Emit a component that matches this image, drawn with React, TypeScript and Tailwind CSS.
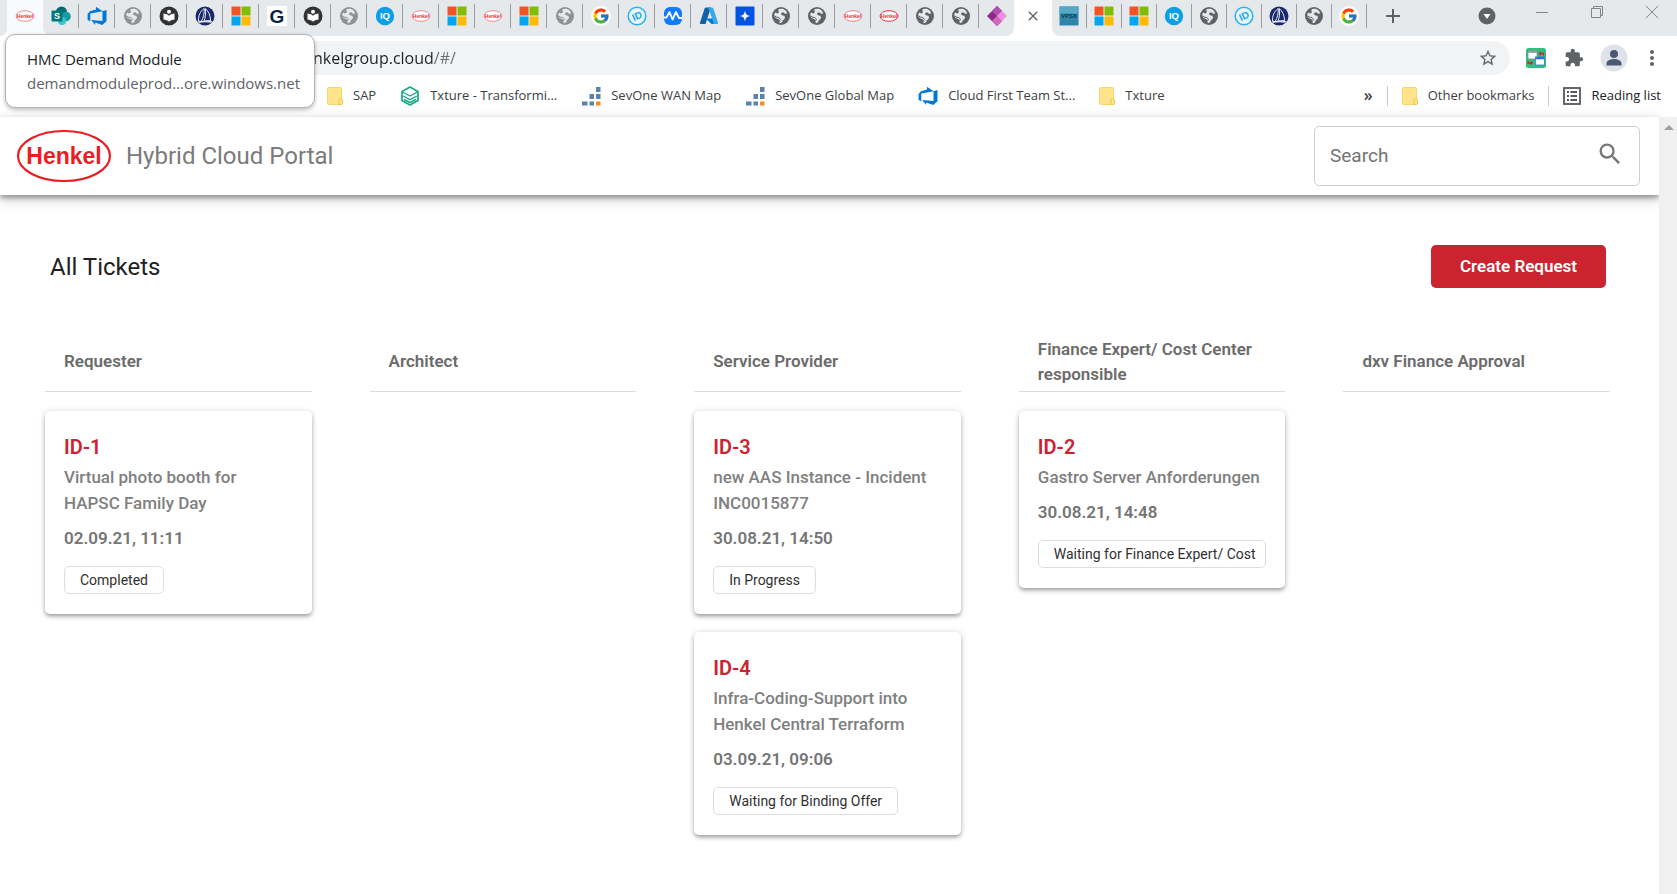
import React from "react";
import { FcGoogle } from "react-icons/fc";
import { MdClose, MdExtension, MdMoreVert, MdSearch, MdStarBorder } from "react-icons/md";

type IconProps = { className?: string };

function HenkelBadge({ fill = "#fff", stroke = "#f08c92" }: { fill?: string; stroke?: string }) {
  return (
    <svg viewBox="0 0 20 20" className="size-5">
      <ellipse cx="10" cy="10" rx="9" ry="5.3" fill={fill} stroke={stroke} strokeWidth="1" />
      <text x="10" y="12" textAnchor="middle" fontFamily="Liberation Sans, sans-serif" fontWeight="700" fontSize="5" fill="#e8323c">
        Henkel
      </text>
    </svg>
  );
}

function SharePoint() {
  return (
    <svg viewBox="0 0 20 20" className="size-5">
      <circle cx="10.5" cy="6" r="5.5" fill="#036c70" />
      <circle cx="15" cy="10.5" r="4.8" fill="#1a9ba1" />
      <circle cx="11" cy="15" r="4" fill="#37c6d0" />
      <rect x="0.5" y="4.5" width="11" height="11" rx="1" fill="#03787c" />
      <text x="6" y="13.2" textAnchor="middle" fontFamily="Liberation Sans, sans-serif" fontWeight="700" fontSize="9" fill="#fff">
        S
      </text>
    </svg>
  );
}

function DevOps() {
  return (
    <svg viewBox="0 0 20 20" className="size-5">
      <path
        d="M19.5 4v11.3l-4.3 3.7-7-2.6v2.5L4.2 14l11.300 .9V5.200L19.500 4zM15.600 5.200L9 .7v2.700L3 5.200.6 8v6l2.700 1.200V7.600l12.300-2.400z"
        fill="#0078d7"
      />
    </svg>
  );
}

function Globe({ color }: { color: string }) {
  return (
    <svg viewBox="0 0 20 20" className="size-5">
      <circle cx="10" cy="10" r="9" fill={color} />
      <path
        d="M7.500 3.300c2-.9 5-.6 6.800.9 1 .9 1.700 2 2 3.300l-2.300.2-1.600-1.500-2 .5-.3 1.700 1.500 1.200 1.700.2.700 1.600-.9 2-1.300.6-.5 1.900-1.500 1.100c-.8 0-1.400-.2-1.400-.2l.300-2.400-1.400-1.500-2.300-.7-1.700-1.900c-.1-1.300.1-2.500.7-3.700l2.300.9 1.500-.9-.3-1.400z"
        fill="#e6e9ec"
      />
      <path d="M3.200 9.800l2.200 1.300 2.500.4 1.500 1.700-.6 1.500" fill="none" stroke={color} strokeWidth="1" />
    </svg>
  );
}

function Reader() {
  return (
    <svg viewBox="0 0 20 20" className="size-5">
      <circle cx="10" cy="10" r="9.500" fill="#333" />
      <circle cx="10" cy="5.800" r="2" fill="#fff" />
      <path d="M4.500 7.500c2.200.2 4 .9 5.500 2.200 1.500-1.300 3.300-2 5.500-2.200v6c-2.200.2-4 .9-5.500 2.200-1.500-1.300-3.300-2-5.500-2.200z" fill="#fff" />
    </svg>
  );
}

function Sailboat() {
  return (
    <svg viewBox="0 0 20 20" className="size-5">
      <circle cx="10" cy="10" r="9.500" fill="#1a2a6c" />
      <path d="M9.200 2.500c.3 4.500-.6 9-3 13l-2.700-.5C3.300 10 5 5.500 9.200 2.500z" fill="none" stroke="#e8ebf7" strokeWidth="1" />
      <path d="M10.300 2.500c3.200 2.700 5.200 7 5.200 12l-6.500.6c1.500-3.600 2-8 1.300-12.600z" fill="none" stroke="#e8ebf7" strokeWidth="1" />
      <path d="M2.500 15.500c4-.8 10-.9 15-.4l-1.300 1.700c-4-.9-8.500-.8-12.200.3z" fill="#dfe3f3" />
    </svg>
  );
}

function Microsoft() {
  return (
    <svg viewBox="0 0 20 20" className="size-5">
      <path d="M.5.500h9v9h-9z" fill="#f35325" />
      <path d="M10.500.500h9v9h-9z" fill="#81bc06" />
      <path d="M.5 10.500h9v9h-9z" fill="#05a6f0" />
      <path d="M10.500 10.500h9v9h-9z" fill="#ffba08" />
    </svg>
  );
}

function LetterG() {
  return (
    <svg viewBox="0 0 20 20" className="size-5">
      <rect width="20" height="20" fill="#fff" />
      <text x="10" y="16.800" textAnchor="middle" fontFamily="Liberation Sans, sans-serif" fontWeight="700" fontSize="19" fill="#0c2340">
        G
      </text>
    </svg>
  );
}

function Iq() {
  return (
    <svg viewBox="0 0 20 20" className="size-5">
      <circle cx="10" cy="10" r="9.200" fill="#0a9fe6" />
      <text x="10" y="13.300" textAnchor="middle" fontFamily="Liberation Sans, sans-serif" fontWeight="700" fontSize="9.500" fill="#fff">
        IQ
      </text>
    </svg>
  );
}

function GoogleDisc() {
  return (
    <span className="flex size-5 items-center justify-center rounded-full bg-white">
      <FcGoogle className="size-[18px]" />
    </span>
  );
}

function IdBadge() {
  return (
    <svg viewBox="0 0 20 20" className="size-5">
      <circle cx="10" cy="10" r="8.800" fill="#e8f5fc" stroke="#2db2f0" strokeWidth="1.600" />
      <text x="10" y="13.500" textAnchor="middle" transform="rotate(-25 10 10)" fontFamily="Liberation Sans, sans-serif" fontWeight="700" fontSize="10" fill="#1ba6ea">
        ID
      </text>
    </svg>
  );
}

function Pulse() {
  return (
    <svg viewBox="0 0 20 20" className="size-5">
      <rect x="1" y="1" width="18" height="18" rx="6" fill="#0f7bff" />
      <path d="M1 11.500h2.500L6.500 6l3 7.500L13 6l3 6h3" fill="none" stroke="#fff" strokeWidth="1.800" strokeLinejoin="round" />
    </svg>
  );
}

function Azure() {
  return (
    <svg viewBox="0 0 20 20" className="size-5">
      <path d="M7 1.500h5L6.500 18H2c-.8 0-1.300-.7-1-1.500L5.600 2.500c.2-.6.700-1 1.400-1z" fill="#1360a8" />
      <path d="M14.500 12.500H6.800l5.200 5c.4.400.8.500 1.300.5h4.500z" fill="#0078d4" />
      <path d="M8 1.500h5c.6 0 1.200.4 1.400 1L19 16.500c.3.800-.3 1.500-1.100 1.500h-4.500c.8 0 1.300-.7 1.100-1.500L9.500 2.500c-.2-.6-.800-1-1.500-1z" fill="#37a9ea" />
    </svg>
  );
}

function Sparkle() {
  return (
    <svg viewBox="0 0 20 20" className="size-5">
      <rect x=".5" y=".5" width="19" height="19" rx="1" fill="#0052e0" />
      <path d="M10 4.500c.6 3.700 1.800 4.900 5.500 5.500-3.700.6-4.900 1.800-5.500 5.500-.6-3.700-1.800-4.900-5.500-5.500 3.700-.6 4.900-1.800 5.500-5.500z" fill="#fff" />
    </svg>
  );
}

function PowerApps() {
  return (
    <svg viewBox="0 0 20 20" className="size-5">
      <path d="M10 0L0 10l10 10 5-5-5-5 5-5z" fill="#8a2a86" />
      <path d="M10 0l5 5-5 5-5-5z" fill="#b04fae" />
      <path d="M15 5l5 5-5 5-5-5z" fill="#f08fdc" />
      <path d="M10 10l5 5-5 5-5-5z" fill="#d268c4" />
    </svg>
  );
}

function Vpsx() {
  return (
    <svg viewBox="0 0 20 20" className="size-5">
      <rect x=".5" y=".5" width="19" height="19" fill="#2f86a8" />
      <rect x=".5" y=".5" width="19" height="7" fill="#56a9c6" />
      <text x="10" y="12.300" textAnchor="middle" fontFamily="Liberation Sans, sans-serif" fontWeight="700" fontSize="6" fill="#103a52">
        VPSX
      </text>
    </svg>
  );
}

function Folder() {
  return (
    <svg viewBox="0 0 16 18" className="h-[18px] w-4">
      <rect x=".5" y=".5" width="14" height="17" rx="1" fill="#ffe48c" stroke="#f5d76c" />
      <path d="M12 17.500v-4.500c0-1 .8-1.500 1.700-1.500s1.800.6 1.800 1.500v3.500c0 .6-.4 1-1 1z" fill="#ffe48c" stroke="#ecc54a" />
    </svg>
  );
}

function TxtureHex() {
  return (
    <svg viewBox="0 0 20 20" className="size-5" fill="none" stroke="#17a98a" strokeWidth="1.700" strokeLinejoin="round">
      <path d="M10 1l8 4.500v9L10 19l-8-4.500v-9z" />
      <path d="M2.500 6l7.500 4 7.500-4M3 10l7 3.700 7-3.700M4 13.500l6 3 6-3" strokeWidth="1.400" />
    </svg>
  );
}

function SevOne() {
  return (
    <svg viewBox="0 0 20 20" className="size-5">
      <g fill="#5b82ab">
        <rect x="15" y="1" width="4.500" height="5" />
        <rect x="8.500" y="8" width="4.500" height="5" />
        <rect x="15" y="8" width="4.500" height="5" />
        <rect x="1" y="15.500" width="5.500" height="4" />
        <rect x="8.500" y="15.500" width="4.500" height="4" />
      </g>
      <rect x="15" y="15.500" width="4.500" height="4" fill="#f68a1f" />
    </svg>
  );
}

function ReadingListIcon() {
  return (
    <svg viewBox="0 0 18 18" className="size-[18px]">
      <rect x="1" y="1" width="16" height="16" fill="none" stroke="#55595d" strokeWidth="1.800" />
      <path d="M4 5h2M4 9h2M4 13h2M7.500 5H14M7.500 9H14M7.500 13H14" stroke="#55595d" strokeWidth="1.800" />
    </svg>
  );
}

function WindowSwitcher() {
  return (
    <svg viewBox="0 0 20 20" className="size-5">
      <rect width="20" height="20" rx="2.500" fill="#2fbf7e" />
      <rect x="2" y="3" width="9" height="8" fill="#fff" stroke="#8a8f94" strokeWidth=".8" />
      <rect x="2" y="3" width="9" height="2" fill="#9aa0a6" />
      <rect x="9.500" y="9" width="9" height="8" fill="#fff" stroke="#3c78d8" strokeWidth=".8" />
      <rect x="9.500" y="9" width="9" height="2.300" fill="#2f6fde" />
      <path d="M13 5.500h4.500v2M13 5.500l1.500-1.500M13 5.500L14.500 7M2 13v2h4.500M6.500 15L5 13.500M6.500 15L5 16.500" fill="none" stroke="#d3222a" strokeWidth="1.300" />
    </svg>
  );
}

function Avatar() {
  return (
    <svg viewBox="0 0 28 28" className="size-7">
      <circle cx="14" cy="14" r="13.500" fill="#dfe3e9" />
      <circle cx="14" cy="10" r="4" fill="#4a5876" />
      <path d="M6.500 21.500v-2c0-3 4-4.500 7.500-4.500s7.500 1.500 7.500 4.500v2z" fill="#4a5876" />
    </svg>
  );
}

function HenkelLogo({ className }: IconProps) {
  return (
    <svg viewBox="0 0 96 54" className={className}>
      <ellipse cx="48" cy="27" rx="46" ry="25" fill="#fff" stroke="#ed1c24" strokeWidth="2.200" />
      <text x="48" y="35" textAnchor="middle" fontFamily="Liberation Sans, sans-serif" fontWeight="700" fontSize="23" fill="#ed1c24">
        Henkel
      </text>
    </svg>
  );
}

const lightGlobe = <Globe color="#8f9193" />;
const darkGlobe = <Globe color="#5f6368" />;

const tabsBeforeActive: [string, React.ReactNode][] = [
  ["SharePoint", <SharePoint />],
  ["Azure DevOps", <DevOps />],
  ["Website", lightGlobe],
  ["Reader", <Reader />],
  ["Sailboat", <Sailboat />],
  ["Microsoft", <Microsoft />],
  ["G", <LetterG />],
  ["Reader", <Reader />],
  ["Website", lightGlobe],
  ["IQ", <Iq />],
  ["Henkel", <HenkelBadge />],
  ["Microsoft", <Microsoft />],
  ["Henkel", <HenkelBadge />],
  ["Microsoft", <Microsoft />],
  ["Website", lightGlobe],
  ["Google", <GoogleDisc />],
  ["ID", <IdBadge />],
  ["Monitoring", <Pulse />],
  ["Azure", <Azure />],
  ["Sparkle", <Sparkle />],
  ["Website", darkGlobe],
  ["Website", darkGlobe],
  ["Henkel", <HenkelBadge stroke="#ee7f88" />],
  ["Henkel", <HenkelBadge stroke="#e8323c" />],
  ["Website", darkGlobe],
  ["Website", darkGlobe],
  ["Power Apps", <PowerApps />],
];

const tabsAfterActive: [string, React.ReactNode][] = [
  ["VPSX", <Vpsx />],
  ["Microsoft", <Microsoft />],
  ["Microsoft", <Microsoft />],
  ["IQ", <Iq />],
  ["Website", darkGlobe],
  ["ID", <IdBadge />],
  ["Sailboat", <Sailboat />],
  ["Website", darkGlobe],
  ["Google", <GoogleDisc />],
];

function Tab({ label, divider = true, narrow = false, children }: { label: string; divider?: boolean; narrow?: boolean; children: React.ReactNode }) {
  return (
    <button
      aria-label={label}
      className={`flex h-6 shrink-0 items-center justify-center border-[#9a9da1] ${narrow ? "w-[35px]" : "w-9"} ${
        divider ? "border-r" : ""
      }`}
    >
      {children}
    </button>
  );
}

function TabStrip() {
  return (
    <div className="flex h-9 bg-white">
      <div className="w-[7px] shrink-0 rounded-br-lg bg-[#e6e9ec]" />
      <button aria-label="HMC Demand Module" className="flex w-9 shrink-0 items-center justify-center bg-[#f9fafb] pb-1">
        <HenkelBadge />
      </button>
      <div className="flex shrink-0 items-start rounded-b-lg bg-[#e6e9ec] pt-1">
        {tabsBeforeActive.map(([label, icon], i) => {
          const last = i === tabsBeforeActive.length - 1;
          return (
            <Tab key={i} label={label} divider={!last} narrow={last}>
              {icon}
            </Tab>
          );
        })}
      </div>
      <button aria-label="Close tab" className="flex w-[38px] shrink-0 items-center justify-center bg-white pb-1 text-[#5f6368]">
        <MdClose className="size-4" />
      </button>
      <div className="flex min-w-0 grow items-start rounded-bl-lg bg-[#e6e9ec] pt-1 text-[#5f6368]">
        {tabsAfterActive.map(([label, icon], i) => (
          <Tab key={i} label={label} narrow>
            {icon}
          </Tab>
        ))}
        <button aria-label="New tab" className="ml-4 flex h-6 w-5 items-center justify-center">
          <svg viewBox="0 0 14 14" className="size-3.5" stroke="#5f6368" strokeWidth="2">
            <path d="M7 0v14M0 7h14" />
          </svg>
        </button>
        <div className="ml-auto flex h-6 shrink-0 items-center gap-10 pr-[19px]">
          <button aria-label="Search tabs">
            <svg viewBox="0 0 18 18" className="size-[18px]">
              <circle cx="9" cy="9" r="8.500" fill="#5f6368" />
              <path d="M5.500 7h7L9 12z" fill="#fff" />
            </svg>
          </button>
          <div className="flex items-center gap-[43px] pb-2">
            <button aria-label="Minimize">
              <svg viewBox="0 0 12 12" className="size-3" fill="none" stroke="#80868b">
                <path d="M0 6.500h12" />
              </svg>
            </button>
            <button aria-label="Restore">
              <svg viewBox="0 0 12 12" className="size-3" fill="none" stroke="#80868b">
                <path d="M.5 2.500h9v9h-9zM2.500 2.500v-2h9v9h-2" />
              </svg>
            </button>
            <button aria-label="Close window">
              <svg viewBox="0 0 12 12" className="size-3" fill="none" stroke="#80868b">
                <path d="M0 0l12 12M12 0L0 12" />
              </svg>
            </button>
          </div>
        </div>
      </div>
    </div>
  );
}

function Toolbar() {
  return (
    <div className="flex h-11 items-center pr-[13px] text-[#5f6368]">
      <div className="ml-32 flex h-[34px] min-w-0 grow items-center rounded-full bg-[#f1f3f4] pr-3 pl-[185px]">
        <input
          aria-label="Address"
          defaultValue="nkelgroup.cloud/#/"
          className="min-w-0 grow bg-[linear-gradient(90deg,#202124_120px,#6b6f74_120px)] bg-clip-text text-base text-transparent caret-black outline-none"
        />
        <button aria-label="Bookmark this page">
          <MdStarBorder className="size-5" />
        </button>
      </div>
      <button aria-label="Window switcher" className="ml-4">
        <WindowSwitcher />
      </button>
      <button aria-label="Extensions" className="ml-[18px]">
        <MdExtension className="size-5" />
      </button>
      <button aria-label="Profile" className="ml-4">
        <Avatar />
      </button>
      <button aria-label="Browser menu" className="ml-3">
        <MdMoreVert className="size-6" />
      </button>
    </div>
  );
}

function Bookmark({ icon, children }: { icon: React.ReactNode; children: React.ReactNode }) {
  return (
    <a href="#" className="flex shrink-0 items-center gap-2.5 whitespace-nowrap">
      {icon}
      {children}
    </a>
  );
}

function BookmarksBar() {
  return (
    <div className="flex h-8 items-center justify-between pr-4 pl-[327px] text-[13px] text-[#3c4043]">
      <nav aria-label="Bookmarks" className="flex items-center gap-6">
        <Bookmark icon={<Folder />}>SAP</Bookmark>
        <Bookmark icon={<TxtureHex />}>Txture - Transformi...</Bookmark>
        <Bookmark icon={<SevOne />}>SevOne WAN Map</Bookmark>
        <Bookmark icon={<SevOne />}>SevOne Global Map</Bookmark>
        <Bookmark icon={<DevOps />}>Cloud First Team St...</Bookmark>
        <Bookmark icon={<Folder />}>Txture</Bookmark>
      </nav>
      <div className="flex items-center gap-3.5">
        <button aria-label="More bookmarks" className="pb-0.5 text-base font-semibold">
          »
        </button>
        <span className="h-5 w-px bg-[#c8cbce]" />
        <Bookmark icon={<Folder />}>Other bookmarks</Bookmark>
        <span className="h-5 w-px bg-[#c8cbce]" />
        <Bookmark icon={<ReadingListIcon />}>
          <span className="text-[#202124]">Reading list</span>
        </Bookmark>
      </div>
    </div>
  );
}

type Ticket = { id: string; title: string; date: string; status: string };

const columns: { name: string; tickets: Ticket[] }[] = [
  {
    name: "Requester",
    tickets: [{ id: "ID-1", title: "Virtual photo booth for HAPSC Family Day", date: "02.09.21, 11:11", status: "Completed" }],
  },
  { name: "Architect", tickets: [] },
  {
    name: "Service Provider",
    tickets: [
      { id: "ID-3", title: "new AAS Instance - Incident INC0015877", date: "30.08.21, 14:50", status: "In Progress" },
      { id: "ID-4", title: "Infra-Coding-Support into Henkel Central Terraform", date: "03.09.21, 09:06", status: "Waiting for Binding Offer" },
    ],
  },
  {
    name: "Finance Expert/ Cost Center responsible",
    tickets: [{ id: "ID-2", title: "Gastro Server Anforderungen", date: "30.08.21, 14:48", status: "Waiting for Finance Expert/ Cost" }],
  },
  { name: "dxv Finance Approval", tickets: [] },
];

function TicketCard({ ticket }: { ticket: Ticket }) {
  return (
    <article className="rounded-[5px] bg-white px-[19px] py-5 shadow-[0_3px_4px_-1px_rgba(0,0,0,0.3),0_1px_6px_rgba(0,0,0,0.2)]">
      <h3 className="text-xl leading-[33px] font-semibold text-[#cb2430]">{ticket.id}</h3>
      <p className="text-[17px] leading-[26px] font-medium text-[#808080]">{ticket.title}</p>
      <p className="mt-[7px] text-[17px] leading-[30px] font-semibold text-[#757575]">{ticket.date}</p>
      <div className="mt-[13px] flex">
        <span className="h-7 max-w-full overflow-hidden rounded-[5px] border border-[#dedede] px-[15px] text-sm leading-[26px] whitespace-nowrap text-[#303030]">
          {ticket.status}
        </span>
      </div>
    </article>
  );
}

function Portal() {
  return (
    <div className="min-w-0 grow font-['Roboto',sans-serif]">
      <header className="flex h-[78px] items-center bg-white pr-[19px] pl-4 shadow-[0_3px_5px_rgba(0,0,0,0.35),0_4px_14px_rgba(0,0,0,0.18)]">
        <HenkelLogo className="h-[54px] w-24" />
        <span className="ml-3.5 text-2xl text-[#7b7b7b]">Hybrid Cloud Portal</span>
        <label className="ml-auto flex h-[60px] w-[326px] items-center rounded-[5px] border border-[#cfcfcf] pr-[15px] pl-[15px]">
          <input placeholder="Search" aria-label="Search" className="min-w-0 grow text-[19px] outline-none placeholder:text-[#737373]" />
          <MdSearch className="mb-1 size-7 text-[#757575]" />
        </label>
      </header>
      <main className="pt-[50px] pr-[49px] pb-14 pl-[45px]">
        <div className="flex items-center justify-between pr-1 pl-[5px]">
          <h1 className="text-2xl text-[#212121]">All Tickets</h1>
          <button className="h-[43px] w-[175px] rounded-[5px] bg-[#cb2430] text-[17px] font-semibold text-white">Create Request</button>
        </div>
        <div className="mt-11 grid grid-cols-5 gap-[58px]">
          {columns.map((column) => (
            <section key={column.name} className="min-w-0">
              <div className="flex h-[60px] items-center border-b border-[#dcdcdc] px-[19px]">
                <h2 className="text-[17px] leading-[25px] font-semibold text-[#6b6b6b]">{column.name}</h2>
              </div>
              <div className="mt-[19px] flex flex-col gap-[18px]">
                {column.tickets.map((ticket) => (
                  <TicketCard key={ticket.id} ticket={ticket} />
                ))}
              </div>
            </section>
          ))}
        </div>
      </main>
    </div>
  );
}

export default function App() {
  return (
    <div className="relative flex min-h-screen flex-col overflow-hidden bg-white font-['Open_Sans',sans-serif]">
      <TabStrip />
      <Toolbar />
      <BookmarksBar />
      <div className="mt-[5px] flex grow">
        <Portal />
        <div className="w-[18px] shrink-0 bg-[#f0f0f0] pt-2">
          <svg viewBox="0 0 10 5" className="ml-[5px] h-[5px] w-2.5">
            <path d="M5 0l5 5H0z" fill="#a0a0a0" />
          </svg>
        </div>
      </div>
      <div role="tooltip" className="absolute top-[34px] left-[5px] flex h-[74px] w-[310px] flex-col justify-center rounded-[10px] border border-[#b0b3b6] bg-white pl-[21px] shadow-[0_2px_4px_rgba(0,0,0,0.25)]">
        <div className="text-[15px] leading-6 font-medium text-[#202124]">HMC Demand Module</div>
        <div className="text-[15px] leading-6 text-[#5f6368]">demandmoduleprod...ore.windows.net</div>
      </div>
    </div>
  );
}
